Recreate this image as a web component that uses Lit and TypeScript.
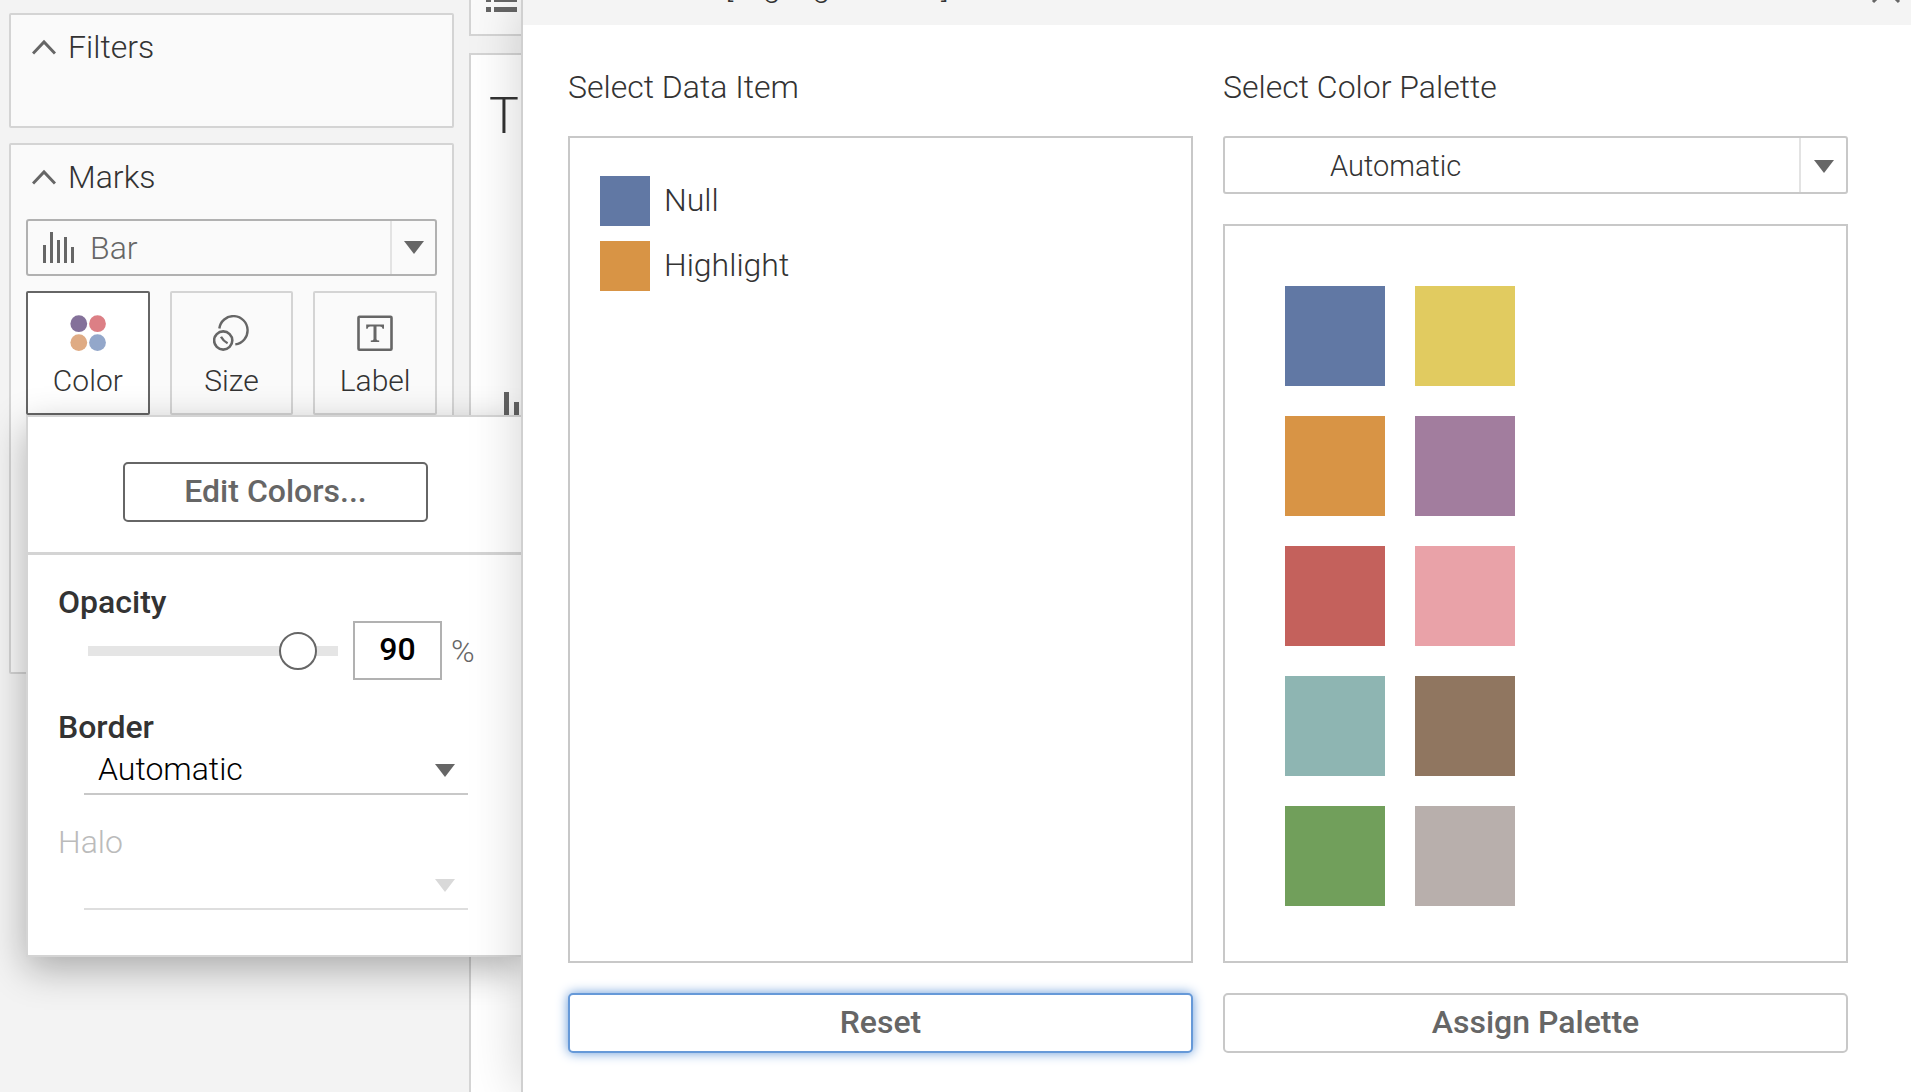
import { LitElement, html, css, svg } from "lit";
import { customElement, state } from "lit/decorators.js";

const PALETTE: string[] = [
  "#6178a4", "#e1cb60",
  "#d89445", "#a27d9e",
  "#c4615c", "#e9a2a8",
  "#8eb5b2", "#907660",
  "#719f5b", "#b8afac",
];

const ITEMS = [
  { name: "Null", color: "#6178a4" },
  { name: "Highlight", color: "#d89445" },
];

const caret = html`<svg class="caret" viewBox="0 0 20 13" width="20" height="13" aria-hidden="true">
  <path d="M0 0H20L10 13Z" fill="currentColor" />
</svg>`;

const chevron = html`<svg viewBox="0 0 24 16" width="24" height="16" aria-hidden="true">
  <path d="M1 14.5L12 3L23 14.5" fill="none" stroke="#666" stroke-width="3" />
</svg>`;

const BARS = [[0, 13], [7, 0], [14, 8], [21, 5], [28, 15]];
const barIcon = html`<svg class="bar-icon" viewBox="0 0 32 32" width="32" height="32" aria-hidden="true">
  ${BARS.map(([x, y]) => svg`<rect x=${x} y=${y} width="3" height=${31 - y} fill="#666" />`)}
</svg>`;

const colorIcon = html`<svg viewBox="0 0 36 37" width="36" height="37" aria-hidden="true">
  <circle cx="8.8" cy="8.7" r="8.4" fill="#84719a" />
  <circle cx="27.5" cy="8.7" r="8.4" fill="#dc7f85" />
  <circle cx="8.8" cy="27.6" r="8.4" fill="#dfab84" />
  <circle cx="27.5" cy="27.6" r="8.4" fill="#93a7ca" />
</svg>`;

const sizeIcon = html`<svg viewBox="0 0 36 37" width="36" height="37" fill="none" stroke="#666" aria-hidden="true">
  <path d="M6.3 13.5A14.2 14.2 0 1 1 22.3 29.4" stroke-width="2.4" />
  <circle cx="10.2" cy="25.5" r="9.1" stroke-width="2.6" />
  <path d="M8 21.7Q10.3 26 14.6 28.2" stroke-width="2.4" />
</svg>`;

const labelIcon = html`<svg viewBox="0 0 36 37" width="36" height="37" aria-hidden="true">
  <rect x="1.5" y="1.7" width="33" height="33" rx="1" fill="none" stroke="#666" stroke-width="2.6" />
  <path d="M9.2 9.5H27V13.8H25.6Q25.2 11.4 23 11.4H19.5V24.2Q19.5 25.4 22.2 25.5V27H13.8V25.5Q16.5 25.4 16.5 24.2V11.4H13.2Q11 11.4 10.6 13.8H9.2Z" fill="#666" />
</svg>`;

@customElement("app-root")
export class AppRoot extends LitElement {
  @state() private opacity = 90;

  static styles = css`
    :host {
      display: block;
      font-family: Roboto, "Liberation Sans", sans-serif;
      font-size: 32px;
      font-weight: 300;
      line-height: 38px;
      color: #333;
    }
    * { box-sizing: border-box; }
    button, input, select {
      font: inherit;
      color: inherit;
      margin: 0;
      outline: none;
    }
    h1, h2, p { margin: 0; font-size: inherit; font-weight: inherit; }
    svg { display: block; flex: none; }

    .workspace {
      position: relative;
      display: flex;
      min-height: 100vh;
      overflow: hidden;
      background: #f3f3f3;
    }
    .cards {
      flex: none;
      width: 469px;
      padding: 13px 15px 0 9px;
      display: flex;
      flex-direction: column;
      gap: 15px;
    }
    .card {
      border: 2px solid #d4d4d4;
      border-radius: 2px;
      background: #fafafa;
      padding: 13px 15px;
    }
    .filters { min-height: 115px; }
    .marks { min-height: 531px; }
    .card-head {
      display: flex;
      align-items: center;
      gap: 12px;
      padding-left: 6px;
    }
    .picker {
      display: grid;
      grid-template-columns: 1fr 45px;
      align-items: center;
      border: 2px solid #c8c8c8;
      border-radius: 3px;
      color: #333;
    }
    .picker select {
      grid-area: 1 / 1 / 2 / 3;
      width: 100%;
      height: 54px;
      appearance: none;
      border: 0;
      background: transparent;
      padding: 0 60px 0 62px;
    }
    .picker .bar-icon { grid-area: 1 / 1; margin-left: 15px; pointer-events: none; }
    .drop {
      grid-area: 1 / 2;
      align-self: stretch;
      display: grid;
      place-items: center;
      border-left: 2px solid #e3e3e3;
      color: #666;
      pointer-events: none;
    }
    .mark-type { margin-top: 23px; border-color: #b1b1b1; color: #666; }
    .mark-type select { height: 53px; }
    .scheme { grid-template-columns: 1fr 47px; }
    .scheme select { padding: 2px 60px 0 105px; font-size: 29px; }
    .scheme .drop { padding-top: 3px; }

    .mark-buttons {
      display: grid;
      grid-template-columns: repeat(3, 1fr);
      gap: 20px;
      margin-top: 15px;
    }
    .mark-button {
      height: 124px;
      display: flex;
      flex-direction: column;
      align-items: center;
      gap: 10px;
      padding: 22px 0 0;
      border: 2px solid #d4d4d4;
      border-radius: 2px;
      background: #fafafa;
      font-size: 30px;
    }
    .mark-button.active { background: #fff; border-color: #666; }

    .view {
      flex: 1;
      min-width: 0;
      display: flex;
      flex-direction: column;
      gap: 17px;
    }
    .shelf {
      height: 36px;
      border: solid #d4d4d4;
      border-width: 0 0 2px 2px;
      background: #fafafa;
      padding-left: 15px;
    }
    .sheet {
      flex: 1;
      border: solid #d4d4d4;
      border-width: 2px 0 0 2px;
      background: #fff;
      padding: 31px 18px;
    }
    .sheet-title { font-size: 50px; line-height: 60px; }
    .sheet-bars { margin: 246px 0 0 15px; }

    .popup {
      position: absolute;
      left: 26px;
      top: 415px;
      width: 499px;
      border: 2px solid #d4d4d4;
      background: #fff;
      box-shadow: 0 12px 36px rgba(0, 0, 0, 0.3);
    }
    .popup-top {
      display: flex;
      justify-content: center;
      padding: 45px 0 30px;
      border-bottom: 3px solid #d4d4d4;
    }
    .button {
      height: 60px;
      border: 2px solid #c8c8c8;
      border-radius: 5px;
      background: #fff;
      color: #666;
      font-weight: 500;
      padding: 0 60px 2px;
    }
    .edit { width: 305px; padding: 0 0 2px; border-color: #666; }
    .popup-body {
      display: grid;
      grid-template-columns: minmax(0, 1fr);
      gap: 28px;
      padding: 28px 55px 45px 30px;
    }
    .field-label { display: block; font-weight: 500; }
    .opacity-row { display: flex; align-items: center; padding-left: 30px; }
    .slider {
      flex: none;
      width: 250px;
      height: 38px;
      appearance: none;
      background: transparent;
    }
    .slider::-webkit-slider-runnable-track { height: 10px; background: #e5e5e5; }
    .slider::-webkit-slider-thumb {
      appearance: none;
      width: 38px;
      height: 38px;
      margin-top: -14px;
      border: 2px solid #666;
      border-radius: 50%;
      background: #fff;
    }
    .percent {
      flex: none;
      width: 89px;
      height: 59px;
      margin: 0 9px 0 15px;
      padding: 0 0 3px;
      border: 2px solid #b1b1b1;
      background: #fff;
      color: #000;
      font-weight: 500;
      text-align: center;
    }
    .unit { color: #666; }
    .line-picker {
      display: grid;
      align-items: center;
      margin-left: 26px;
      border-bottom: 2px solid #c8c8c8;
      color: #666;
    }
    .line-picker select {
      grid-area: 1 / 1;
      width: 100%;
      height: 47px;
      appearance: none;
      border: 0;
      background: transparent;
      padding: 0 48px 2px 14px;
      color: #000;
    }
    .line-picker .caret { grid-area: 1 / 1; justify-self: end; margin: 2px 13px 0 0; pointer-events: none; }
    .off .field-label { font-weight: 300; color: #bbb; }
    .off .line-picker { color: #d9d9d9; border-color: #dedede; }

    .dialog {
      position: absolute;
      inset: 0 0 0 521px;
      display: flex;
      flex-direction: column;
      border-left: 2px solid #d0d0d0;
      background: #fff;
      box-shadow: 0 0 50px rgba(0, 0, 0, 0.18);
    }
    .titlebar {
      height: 25px;
      flex: none;
      display: flex;
      align-items: flex-end;
      justify-content: space-between;
      overflow: hidden;
      background: #f4f4f4;
      padding: 0 10px 0 43px;
    }
    .titlebar h1 { padding-bottom: 20px; white-space: nowrap; }
    .close { border: 0; background: none; padding: 0 0 21px; }
    .columns {
      flex: 1;
      display: grid;
      grid-template-columns: 1fr 1fr;
      gap: 30px;
      padding: 43px 63px 39px 45px;
    }
    .column { display: flex; flex-direction: column; gap: 30px; }
    .frame { border: 2px solid #c8c8c8; background: #fff; flex: 1; }
    .items {
      list-style: none;
      margin: 0;
      padding: 38px 30px;
      display: flex;
      flex-direction: column;
      gap: 15px;
    }
    .item { display: flex; align-items: center; gap: 14px; }
    .item-name { padding-bottom: 2px; }
    .chip { width: 50px; height: 50px; }
    .swatches {
      display: grid;
      grid-template-columns: 100px 100px;
      grid-auto-rows: 100px;
      gap: 30px;
      padding: 60px 60px 55px;
    }
    .swatch { border: 0; padding: 0; }
    .focused { border-color: #6699d8; box-shadow: 0 0 12px #6699d8; }
  `;

  private setOpacity(e: Event) {
    this.opacity = Number((e.target as HTMLInputElement).value);
  }

  render() {
    return html`
      <div class="workspace">
        <aside class="cards">
          <section class="card filters">
            <h2 class="card-head">${chevron}<span>Filters</span></h2>
          </section>
          <section class="card marks">
            <h2 class="card-head">${chevron}<span>Marks</span></h2>
            <div class="picker mark-type">
              ${barIcon}
              <select aria-label="Mark type"><option>Bar</option></select>
              <span class="drop">${caret}</span>
            </div>
            <div class="mark-buttons">
              <button class="mark-button active">${colorIcon}<span>Color</span></button>
              <button class="mark-button">${sizeIcon}<span>Size</span></button>
              <button class="mark-button">${labelIcon}<span>Label</span></button>
            </div>
          </section>
        </aside>

        <main class="view">
          <div class="shelf">
            <svg viewBox="0 0 32 13" width="32" height="13" fill="#666" aria-hidden="true">
              <path d="M0 0H5V2H0ZM8 0H31V2H8ZM0 7H5V12H0ZM8 7H31V12H8Z" />
            </svg>
          </div>
          <div class="sheet">
            <p class="sheet-title">T</p>
            <svg class="sheet-bars" viewBox="0 0 16 28" width="16" height="28" fill="#666" aria-hidden="true">
              <path d="M0 0H5V28H0ZM10 10H15V28H10Z" />
            </svg>
          </div>
        </main>

        <section class="popup">
          <div class="popup-top"><button class="button edit">Edit Colors...</button></div>
          <div class="popup-body">
            <div>
              <label class="field-label" for="opacity">Opacity</label>
              <div class="opacity-row">
                <input class="slider" id="opacity" type="range" min="0" max="100"
                  .value=${String(this.opacity)} @input=${this.setOpacity} />
                <input class="percent" type="text" aria-label="Opacity percent"
                  .value=${String(this.opacity)} @change=${this.setOpacity} />
                <span class="unit">%</span>
              </div>
            </div>
            <div>
              <label class="field-label" for="border">Border</label>
              <div class="line-picker">
                <select id="border"><option>Automatic</option></select>${caret}
              </div>
            </div>
            <div class="off">
              <label class="field-label" for="halo">Halo</label>
              <div class="line-picker">
                <select id="halo" disabled><option></option></select>${caret}
              </div>
            </div>
          </div>
        </section>

        <section class="dialog" role="dialog" aria-labelledby="dialog-title">
          <header class="titlebar">
            <h1 id="dialog-title">Edit Colors [Highlight Color]</h1>
            <button class="close" aria-label="Close">
              <svg viewBox="0 0 30 30" width="30" height="30" aria-hidden="true">
                <path d="M2 2L28 28M28 2L2 28" stroke="#666" stroke-width="3" />
              </svg>
            </button>
          </header>
          <div class="columns">
            <div class="column">
              <h2>Select Data Item</h2>
              <ul class="frame items">
                ${ITEMS.map((i) => html`<li class="item">
                  <span class="chip" style="background:${i.color}"></span><span class="item-name">${i.name}</span>
                </li>`)}
              </ul>
              <button class="button focused">Reset</button>
            </div>
            <div class="column">
              <label for="scheme">Select Color Palette</label>
              <div class="picker scheme">
                <select id="scheme"><option>Automatic</option></select>
                <span class="drop">${caret}</span>
              </div>
              <div class="frame swatches">
                ${PALETTE.map((c) => html`<button class="swatch" aria-label=${c} style="background:${c}"></button>`)}
              </div>
              <button class="button">Assign Palette</button>
            </div>
          </div>
        </section>
      </div>
    `;
  }
}
